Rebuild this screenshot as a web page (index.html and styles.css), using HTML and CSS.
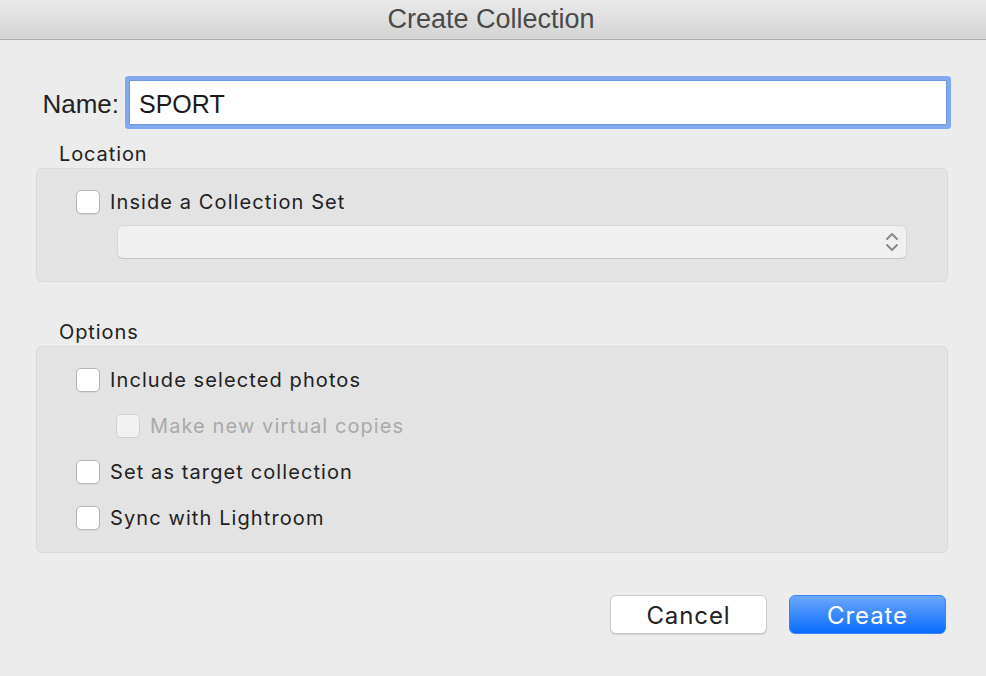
FILE: index.html
```html
<!DOCTYPE html>
<html lang="en">

<head>
    <meta charset="UTF-8">
    <title>Create Collection</title>
    <link rel="stylesheet" href="styles.css">
</head>

<body>
    <div class="dialog">
        <div class="titlebar">Create Collection</div>

        <div class="content">
            <div class="name-row">
                <label class="name-label" for="name">Name:</label>
                <input class="name-input" id="name" type="text" value="SPORT">
            </div>

            <div class="section-label">Location</div>
            <div class="group location">
                <label class="check-row">
                    <span class="checkbox"></span>
                    <span>Inside a Collection Set</span>
                </label>
                <div class="select">
                    <svg class="chevrons" width="14" height="22" viewBox="0 0 14 22">
                        <path d="M2 8 L7 3 L12 8" />
                        <path d="M2 14 L7 19 L12 14" />
                    </svg>
                </div>
            </div>

            <div class="section-label options-label">Options</div>
            <div class="group options">
                <label class="check-row">
                    <span class="checkbox"></span>
                    <span>Include selected photos</span>
                </label>
                <label class="check-row sub disabled">
                    <span class="checkbox"></span>
                    <span>Make new virtual copies</span>
                </label>
                <label class="check-row">
                    <span class="checkbox"></span>
                    <span>Set as target collection</span>
                </label>
                <label class="check-row">
                    <span class="checkbox"></span>
                    <span>Sync with Lightroom</span>
                </label>
            </div>

            <div class="actions">
                <button class="btn cancel">Cancel</button>
                <button class="btn create">Create</button>
            </div>
        </div>
    </div>
</body>

</html>
```

FILE: styles.css
```css
* {
    margin: 0;
    padding: 0;
    box-sizing: border-box;
}

body {
    background: #ececec;
    font-family: 'Inter', 'Noto Sans', sans-serif;
    color: #222;
}

.dialog {
    width: 986px;
    height: 676px;
    background: #ececec;
    overflow: hidden;
}

.titlebar {
    height: 40px;
    background: linear-gradient(#e9e9e9, #d4d4d4);
    border-bottom: 1px solid #adadad;
    text-align: center;
    font-family: 'Liberation Sans', Arial, sans-serif;
    font-size: 27px;
    line-height: 38px;
    color: #4a4a4a;
    padding-right: 4px;
}

.content {
    padding: 40px 38px 0 36px;
}

.name-row {
    display: flex;
    align-items: center;
    height: 45px;
}

.name-label {
    width: 83px;
    text-align: right;
    font-family: 'Liberation Sans', Arial, sans-serif;
    font-size: 26px;
    color: #222;
    padding-top: 3px;
}

.name-input {
    margin-left: 10px;
    width: 818px;
    height: 45px;
    border: 1px solid #6f98e0;
    border-radius: 1px;
    box-shadow: 0 0 0 4px #80a9f0;
    background: #fff;
    padding: 3px 0 0 9px;
    font-family: 'Liberation Sans', Arial, sans-serif;
    font-size: 25px;
    color: #1a1a1a;
    outline: none;
}

.section-label {
    margin-top: 17px;
    padding-left: 23px;
    height: 24px;
    line-height: 24px;
    font-size: 20px;
    letter-spacing: 0.9px;
    color: #222;
    margin-bottom: 2px;
}

.options-label {
    margin-top: 38px;
}

.group {
    width: 912px;
    background: #e3e3e3;
    border: 1px solid #d9d9d9;
    border-radius: 6px;
    padding: 21px 40px 22px 39px;
    display: flex;
    flex-direction: column;
}

.location {
    height: 114px;
}

.options {
    height: 207px;
    gap: 22px;
}

.check-row {
    display: flex;
    align-items: center;
    height: 24px;
    font-size: 20px;
    letter-spacing: 1.1px;
    color: #222;
    gap: 10px;
}

.checkbox {
    width: 24px;
    height: 24px;
    background: #fff;
    border: 1px solid #b6b6b6;
    border-radius: 5px;
    box-shadow: 0 1px 1px rgba(0, 0, 0, 0.06);
}

.check-row.sub {
    padding-left: 40px;
}

.disabled {
    color: #a9a9a9;
}

.disabled .checkbox {
    background: #f1f1f1;
    border-color: #d0d0d0;
    box-shadow: none;
}

.select {
    margin-top: 11px;
    margin-left: 41px;
    height: 34px;
    background: #f0f0f0;
    border: 1px solid #d6d6d6;
    border-bottom-color: #c4c4c4;
    border-radius: 6px;
    display: flex;
    align-items: center;
    justify-content: flex-end;
    padding-right: 7px;
}

.chevrons path {
    fill: none;
    stroke: #8a8a8a;
    stroke-width: 2;
    stroke-linecap: round;
    stroke-linejoin: round;
}

.actions {
    margin-top: 42px;
    display: flex;
    justify-content: flex-end;
    gap: 22px;
    padding-right: 2px;
}

.btn {
    width: 157px;
    height: 39px;
    border-radius: 6px;
    font-family: 'Inter', 'Noto Sans', sans-serif;
    font-size: 24px;
    letter-spacing: 0.9px;
    padding-top: 2px;
    cursor: pointer;
}

.cancel {
    background: #fff;
    border: 1px solid #c9c9c9;
    box-shadow: 0 1px 1px rgba(0, 0, 0, 0.12);
    color: #222;
}

.create {
    background: linear-gradient(#6ba8fb, #0a6bfe);
    border: 1px solid #3b84f5;
    color: #fff;
}
```
